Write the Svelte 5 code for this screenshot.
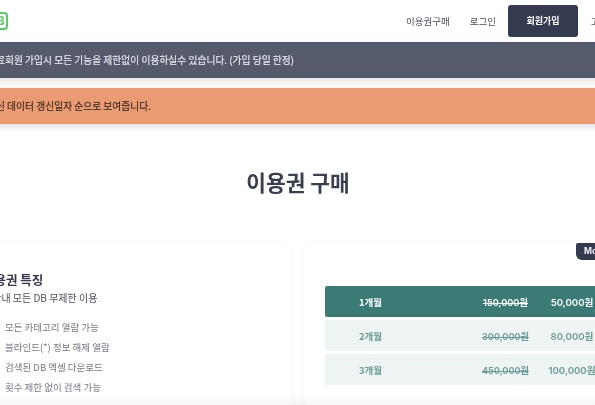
<script>
	const rows = [
		{ name: '1개월', old: '150,000원', price: '50,000원', active: true },
		{ name: '2개월', old: '300,000원', price: '80,000원' },
		{ name: '3개월', old: '450,000원', price: '100,000원' }
	];
	const features = ['모든 카테고리 열람 가능', '블라인드(*) 정보 해제 열람', '검색된 DB 엑셀 다운로드', '횟수 제한 없이 검색 가능'];
</script>

<div class="page">
	<header class="nav">
		<div class="logo">DB</div>
		<nav>
			<a href="#buy">이용권구매</a>
			<a href="#login">로그인</a>
			<a href="#join" class="join">회원가입</a>
			<a href="#help">고객센터</a>
		</nav>
	</header>

	<div class="notice dark">무료회원 가입시 모든 기능을 제한없이 이용하실수 있습니다. (가입 당일 한정)</div>
	<div class="notice orange">최신 데이터 갱신일자 순으로 보여줍니다.</div>

	<h1>이용권 구매</h1>

	<div class="cards">
		<section class="card left">
			<h2>이용권 특징</h2>
			<p class="sub">기간내 모든 DB 무제한 이용</p>
			<ul>
				{#each features as f}
					<li>{f}</li>
				{/each}
			</ul>
		</section>
		<section class="card right">
			<span class="badge">Most</span>
			{#each rows as r}
				<div class="row" class:active={r.active}>
					<span class="name">{r.name}</span>
					<s>{r.old}</s>
					<span class="price">{r.price}</span>
				</div>
			{/each}
		</section>
	</div>
	<div class="fade"></div>
</div>

<style>
	:global(body) {
		margin: 0;
		background: #fff;
		overflow: hidden;
		font-family: "Noto Sans CJK KR", "Noto Sans", sans-serif;
	}
	.page {
		position: relative;
		width: 720px;
		height: 405px;
		margin-left: -20px;
		overflow: hidden;
		filter: blur(0.4px);
	}
	.nav {
		height: 42px;
		display: flex;
		align-items: center;
		box-sizing: border-box;
		position: relative;
		box-shadow: 0 3px 8px rgba(40, 44, 60, 0.12);
	}
	.logo {
		margin-left: 2px;
		width: 26px;
		height: 18px;
		margin-top: -1px;
		border: 2px solid #5cc96b;
		border-radius: 4px;
		box-sizing: border-box;
		color: #5cc96b;
		font: 700 13px/14px "Liberation Sans", sans-serif;
		text-align: right;
		padding-right: 1px;
	}
	nav {
		display: flex;
		align-items: center;
		margin-left: 398px;
		font-size: 9.5px;
		color: #4a4f5e;
	}
	nav a {
		color: inherit;
		text-decoration: none;
		margin-left: 20px;
		white-space: nowrap;
	}
	nav a:first-child {
		margin-left: 0;
	}
	nav a.join {
		background: #343a50;
		color: #fff;
		font-size: 9px;
		font-weight: 700;
		width: 70px;
		height: 32px;
		line-height: 32px;
		text-align: center;
		border-radius: 3px;
		margin-left: 12px;
	}
	nav a.join + a {
		margin-left: 13px;
	}
	.notice {
		height: 36px;
		line-height: 36px;
		font-size: 9.75px;
		-webkit-text-stroke: 0.15px currentColor;
		box-shadow: 0 3px 8px rgba(40, 44, 60, 0.15);
		white-space: nowrap;
		padding-left: 7px;
	}
	.dark {
		background: #555a6c;
		color: #e9e9ee;
		position: relative;
	}
	.orange {
		background: #ea9b72;
		color: #3a2a22;
		margin-top: 10px;
	}
	h1 {
		width: 636px;
		margin: 45px 0 0;
		height: 26px;
		line-height: 26px;
		font-size: 21.4px;
		font-weight: 700;
		color: #3a3f4f;
		text-align: center;
	}
	.cards {
		display: flex;
		margin-top: 48px;
		gap: 15px;
	}
	.card {
		position: relative;
		height: 200px;
		background: #fff;
		border-radius: 10px;
		box-shadow: 0 2px 14px rgba(40, 44, 60, 0.03);
		box-sizing: border-box;
	}
	.left {
		width: 310px;
		padding: 28px 0 0 3px;
	}
	h2 {
		margin: 0;
		font-size: 12.5px;
		line-height: 18px;
		font-weight: 700;
		color: #343a50;
	}
	.sub {
		margin: 1px 0 0;
		font-size: 10px;
		line-height: 16px;
		color: #4a4f5e;
	}
	ul {
		list-style: none;
		margin: 11px 0 0;
		padding: 0 0 0 22px;
	}
	li {
		font-size: 9.5px;
		line-height: 20px;
		color: #747988;
	}
	.right {
		width: 380px;
		padding: 43px 0 0 20px;
	}
	.badge {
		position: absolute;
		left: 271px;
		top: 0;
		height: 17px;
		width: 60px;
		background: #343a50;
		color: #f0f0f4;
		font: 700 8.5px/17px "Inter", sans-serif;
		padding-left: 8px;
		box-sizing: border-box;
		border-radius: 2px 0 0 6px;
	}
	.row {
		display: flex;
		align-items: center;
		height: 31px;
		margin-bottom: 3px;
		width: 330px;
		background: #eef4f4;
		color: #6a9c97;
		border-radius: 2px;
		font-size: 9.5px;
		font-weight: 700;
		white-space: nowrap;
	}
	.row.active {
		background: #3a7b75;
		color: #fff;
	}
	.name {
		width: 91px;
		text-align: center;
	}
	s {
		margin-left: 52px;
		width: 75px;
		text-align: center;
		font-family: "Inter", "Noto Sans CJK KR", sans-serif;
		font-size: 9.2px;
		font-weight: 600;
	}
	.price {
		width: 58px;
		text-align: center;
		font-family: "Inter", "Noto Sans CJK KR", sans-serif;
		font-size: 9.6px;
		font-weight: 600;
	}
	.fade {
		position: absolute;
		left: 0;
		right: 0;
		bottom: 0;
		height: 12px;
		background: linear-gradient(rgba(40, 44, 60, 0), rgba(40, 44, 60, 0.04));
	}
</style>
